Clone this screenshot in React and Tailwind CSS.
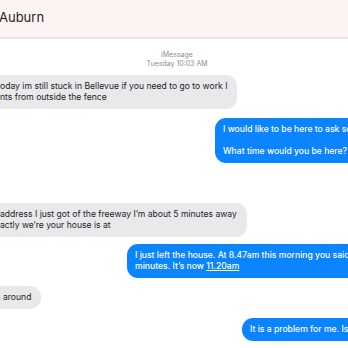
import React from "react";

const Gray = ({ lines, className = "" }) => (
  <div className={`flex ${className}`}>
    <div className="shrink-0 -ml-[14px] rounded-[11px] bg-[#e9e9eb] py-[6px] pl-[14px] pr-[10px] text-[#1d1d1f]">
      {lines.map((l, i) => (
        <div key={i} className="whitespace-nowrap">{l}</div>
      ))}
    </div>
  </div>
);

const Blue = ({ lines, left, className = "" }) => (
  <div className={`flex ${className}`} style={{ paddingLeft: left }}>
    <div className="shrink-0 rounded-[11px] bg-[#0a84ff] py-[6px] pl-[8px] pr-[20px] text-white font-medium">
      {lines.map((l, i) => (
        <div key={i} className="whitespace-nowrap">{l || "\u00a0"}</div>
      ))}
    </div>
  </div>
);

export default function App() {
  return (
    <div
      className="w-[348px] h-[348px] overflow-hidden bg-white"
      style={{ fontFamily: "Inter, 'Liberation Sans', sans-serif" }}
    >
      <div className="h-[39px] bg-[#fdf3f2] border-b-2 border-[#e7e5e4] flex items-center">
        <span className="-ml-[1px] text-[13px] text-[#1d1d1f] pb-[2px]">Auburn</span>
      </div>

      <div className="pt-[11px] text-center text-[7px] leading-[9px] text-[#8e8e93] pl-[6px]">
        <div>iMessage</div>
        <div>Tuesday 10:03 AM</div>
      </div>

      <div className="text-[8.6px] leading-[11px]">
        <Gray
          className="mt-[7px]"
          lines={[
            "oday  im still stuck in Bellevue if you need to go to work I",
            "nts from outside the fence",
          ]}
        />
        <Blue
          className="mt-[9px]"
          left={215}
          lines={[
            "I would like to be here to ask some questions.",
            "",
            "What time would you be here?",
          ]}
        />
        <Gray
          className="mt-[40px]"
          lines={[
            "address I just got of the freeway I’m about 5 minutes away",
            "actly we’re your house is at",
          ]}
        />
        <Blue
          className="mt-[7px]"
          left={127}
          lines={[
            "I just left the house. At 8.47am this morning you said 20",
            <span key="b">
              minutes. It’s now <span className="underline">11.20am</span>
            </span>,
          ]}
        />
        <Gray className="mt-[8px]" lines={[<span key="a" className="-ml-[4px]">s around</span>]} />
        <Blue className="mt-[9px]" left={242} lines={["It is a problem for me. Is it for you?"]} />
      </div>
    </div>
  );
}
